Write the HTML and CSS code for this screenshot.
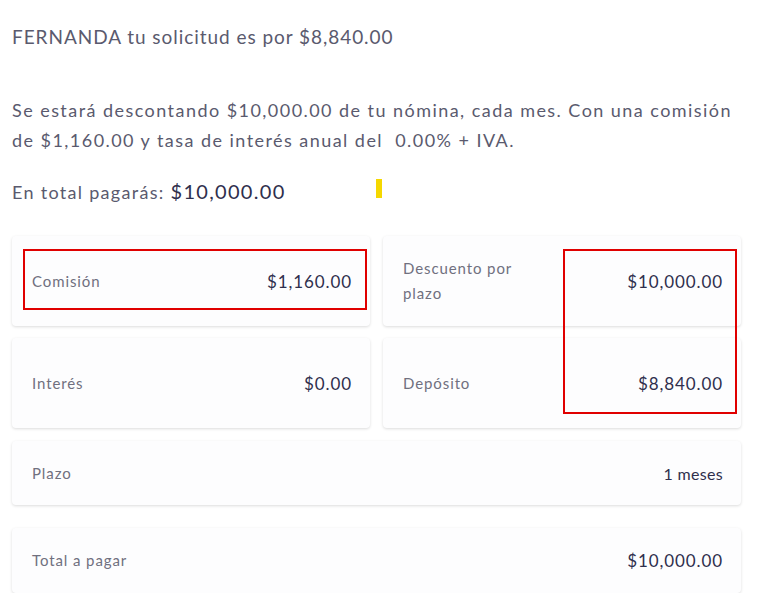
FILE: index.html
```html
<!DOCTYPE html>
<html lang="es">
<head>
    <meta charset="UTF-8">
    <meta name="viewport" content="width=device-width, initial-scale=1.0">
    <title>Resumen de solicitud</title>
    <link rel="stylesheet" href="styles.css">
</head>
<body>
    <div class="summary">
        <p class="intro">FERNANDA tu solicitud es por $8,840.00</p>

        <p class="detail">Se estará descontando $10,000.00 de tu nómina, cada mes. Con una comisión de $1,160.00 y tasa de interés anual del &nbsp;0.00% + IVA.</p>

        <p class="total-line">En total pagarás: <strong>$10,000.00</strong><span class="marker"></span></p>

        <!-- Breakdown cards -->
        <div class="grid">
            <div class="card">
                <span class="label">Comisión</span>
                <span class="value">$1,160.00</span>
            </div>
            <div class="card">
                <span class="label">Descuento por<br>plazo</span>
                <span class="value">$10,000.00</span>
            </div>
            <div class="card">
                <span class="label">Interés</span>
                <span class="value">$0.00</span>
            </div>
            <div class="card">
                <span class="label">Depósito</span>
                <span class="value">$8,840.00</span>
            </div>

            <!-- Highlight boxes -->
            <div class="highlight highlight-one"></div>
            <div class="highlight highlight-two"></div>
        </div>

        <div class="card card-wide card-plazo">
            <span class="label">Plazo</span>
            <span class="value value-small">1 meses</span>
        </div>

        <div class="card card-wide card-total">
            <span class="label">Total a pagar</span>
            <span class="value">$10,000.00</span>
        </div>
    </div>
</body>
</html>
```

FILE: styles.css
```css
body {
    font-family: Lato, "Open Sans", sans-serif;
    background-color: #fff;
    color: #5a5a6e;
    margin: 0;
    padding: 0;
}

.summary {
    width: 729px;
    padding: 25px 0 0 12px;
}

p {
    margin: 0;
}

.intro {
    font-size: 19px;
    line-height: 24px;
    letter-spacing: 0.95px;
}

.detail {
    font-size: 18px;
    line-height: 30px;
    letter-spacing: 1.45px;
    margin-top: 46px;
}

.total-line {
    position: relative;
    font-size: 18px;
    line-height: 30px;
    letter-spacing: 1.3px;
    margin-top: 21px;
}

.total-line strong {
    font-weight: 400;
    font-size: 20px;
    letter-spacing: 1.3px;
    color: #2f2f4d;
}

/* Small yellow tick on the right of the total */
.marker {
    position: absolute;
    left: 364px;
    top: 3px;
    width: 6px;
    height: 19px;
    background-color: #f5d800;
}

/* Cards */
.grid {
    position: relative;
    display: grid;
    grid-template-columns: 358px 358px;
    grid-auto-rows: 90px;
    column-gap: 13px;
    row-gap: 12px;
    margin-top: 29px;
}

.card {
    display: flex;
    align-items: center;
    justify-content: space-between;
    padding: 0 18px 0 20px;
    background-color: #fdfdfe;
    border-radius: 4px;
    box-shadow: 0 1px 3px rgba(0, 0, 0, 0.14);
}

.label {
    font-size: 15px;
    line-height: 25px;
    letter-spacing: 0.9px;
    color: #70707f;
}

.value {
    font-size: 17px;
    letter-spacing: 0.9px;
    color: #2f2f4d;
}

.value-small {
    font-size: 16px;
    letter-spacing: 0.3px;
}

.card-wide {
    height: 64px;
}

.card-plazo {
    margin-top: 13px;
}

.card-total {
    margin-top: 23px;
    height: 65px;
}

/* Red highlight boxes drawn over the cards */
.highlight {
    position: absolute;
    border: 2px solid #e00000;
}

.highlight-one {
    left: 11px;
    top: 13px;
    width: 340px;
    height: 57px;
}

.highlight-two {
    left: 551px;
    top: 13px;
    width: 170px;
    height: 161px;
}
```
